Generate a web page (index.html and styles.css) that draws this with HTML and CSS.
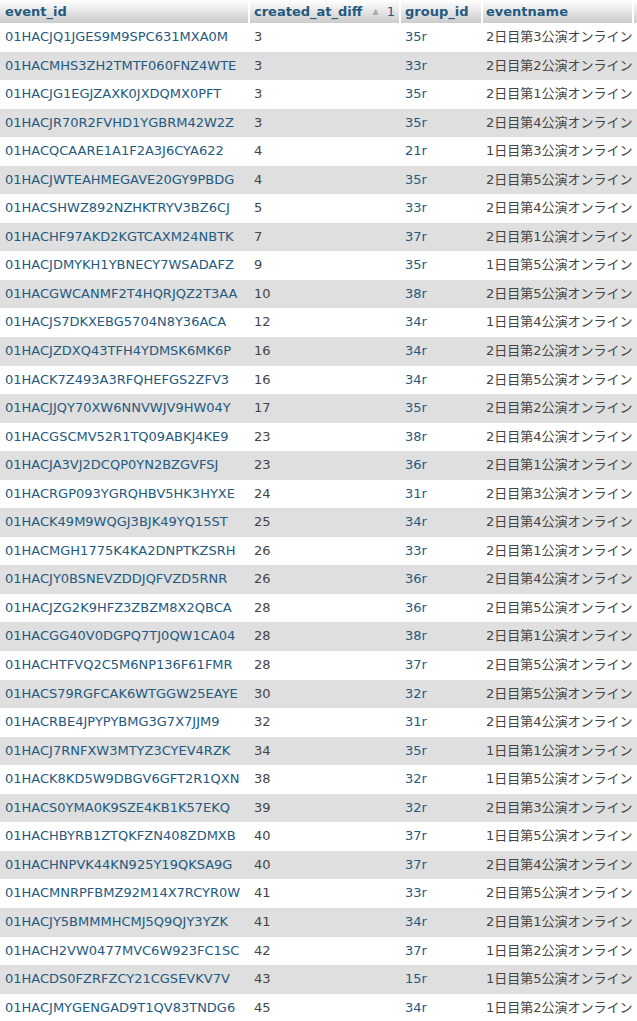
FILE: index.html
```html
<!DOCTYPE html>
<html lang="ja">
<head>
    <meta charset="UTF-8">
    <meta name="viewport" content="width=device-width, initial-scale=1.0">
    <title>event results</title>
    <link rel="stylesheet" href="styles.css">
</head>
<body>

    <!-- Result table (wider than the window, last column is cut off) -->
    <table class="data">
        <colgroup>
            <col class="c-id">
            <col class="c-diff">
            <col class="c-group">
            <col class="c-name">
            <col class="c-more">
        </colgroup>
        <thead>
            <tr>
                <th class="first">event_id</th>
                <th>created_at_diff <span class="sort"><span class="arrow">&#9650;</span> 1</span></th>
                <th>group_id</th>
                <th class="name">eventname</th>
                <th></th>
            </tr>
        </thead>
        <tbody>
            <tr><td class="first link">01HACJQ1JGES9M9SPC631MXA0M</td><td>3</td><td class="link">35r</td><td class="name">2日目第3公演オンライン</td><td></td></tr>
            <tr><td class="first link">01HACMHS3ZH2TMTF060FNZ4WTE</td><td>3</td><td class="link">33r</td><td class="name">2日目第2公演オンライン</td><td></td></tr>
            <tr><td class="first link">01HACJG1EGJZAXK0JXDQMX0PFT</td><td>3</td><td class="link">35r</td><td class="name">2日目第1公演オンライン</td><td></td></tr>
            <tr><td class="first link">01HACJR70R2FVHD1YGBRM42W2Z</td><td>3</td><td class="link">35r</td><td class="name">2日目第4公演オンライン</td><td></td></tr>
            <tr><td class="first link">01HACQCAARE1A1F2A3J6CYA622</td><td>4</td><td class="link">21r</td><td class="name">1日目第3公演オンライン</td><td></td></tr>
            <tr><td class="first link">01HACJWTEAHMEGAVE20GY9PBDG</td><td>4</td><td class="link">35r</td><td class="name">2日目第5公演オンライン</td><td></td></tr>
            <tr><td class="first link">01HACSHWZ892NZHKTRYV3BZ6CJ</td><td>5</td><td class="link">33r</td><td class="name">2日目第4公演オンライン</td><td></td></tr>
            <tr><td class="first link">01HACHF97AKD2KGTCAXM24NBTK</td><td>7</td><td class="link">37r</td><td class="name">2日目第1公演オンライン</td><td></td></tr>
            <tr><td class="first link">01HACJDMYKH1YBNECY7WSADAFZ</td><td>9</td><td class="link">35r</td><td class="name">1日目第5公演オンライン</td><td></td></tr>
            <tr><td class="first link">01HACGWCANMF2T4HQRJQZ2T3AA</td><td>10</td><td class="link">38r</td><td class="name">2日目第5公演オンライン</td><td></td></tr>
            <tr><td class="first link">01HACJS7DKXEBG5704N8Y36ACA</td><td>12</td><td class="link">34r</td><td class="name">1日目第4公演オンライン</td><td></td></tr>
            <tr><td class="first link">01HACJZDXQ43TFH4YDMSK6MK6P</td><td>16</td><td class="link">34r</td><td class="name">2日目第2公演オンライン</td><td></td></tr>
            <tr><td class="first link">01HACK7Z493A3RFQHEFGS2ZFV3</td><td>16</td><td class="link">34r</td><td class="name">2日目第5公演オンライン</td><td></td></tr>
            <tr><td class="first link">01HACJJQY70XW6NNVWJV9HW04Y</td><td>17</td><td class="link">35r</td><td class="name">2日目第2公演オンライン</td><td></td></tr>
            <tr><td class="first link">01HACGSCMV52R1TQ09ABKJ4KE9</td><td>23</td><td class="link">38r</td><td class="name">2日目第4公演オンライン</td><td></td></tr>
            <tr><td class="first link">01HACJA3VJ2DCQP0YN2BZGVFSJ</td><td>23</td><td class="link">36r</td><td class="name">2日目第1公演オンライン</td><td></td></tr>
            <tr><td class="first link">01HACRGP093YGRQHBV5HK3HYXE</td><td>24</td><td class="link">31r</td><td class="name">2日目第3公演オンライン</td><td></td></tr>
            <tr><td class="first link">01HACK49M9WQGJ3BJK49YQ15ST</td><td>25</td><td class="link">34r</td><td class="name">2日目第4公演オンライン</td><td></td></tr>
            <tr><td class="first link">01HACMGH1775K4KA2DNPTKZSRH</td><td>26</td><td class="link">33r</td><td class="name">2日目第1公演オンライン</td><td></td></tr>
            <tr><td class="first link">01HACJY0BSNEVZDDJQFVZD5RNR</td><td>26</td><td class="link">36r</td><td class="name">2日目第4公演オンライン</td><td></td></tr>
            <tr><td class="first link">01HACJZG2K9HFZ3ZBZM8X2QBCA</td><td>28</td><td class="link">36r</td><td class="name">2日目第5公演オンライン</td><td></td></tr>
            <tr><td class="first link">01HACGG40V0DGPQ7TJ0QW1CA04</td><td>28</td><td class="link">38r</td><td class="name">2日目第1公演オンライン</td><td></td></tr>
            <tr><td class="first link">01HACHTFVQ2C5M6NP136F61FMR</td><td>28</td><td class="link">37r</td><td class="name">2日目第5公演オンライン</td><td></td></tr>
            <tr><td class="first link">01HACS79RGFCAK6WTGGW25EAYE</td><td>30</td><td class="link">32r</td><td class="name">2日目第5公演オンライン</td><td></td></tr>
            <tr><td class="first link">01HACRBE4JPYPYBMG3G7X7JJM9</td><td>32</td><td class="link">31r</td><td class="name">2日目第4公演オンライン</td><td></td></tr>
            <tr><td class="first link">01HACJ7RNFXW3MTYZ3CYEV4RZK</td><td>34</td><td class="link">35r</td><td class="name">1日目第1公演オンライン</td><td></td></tr>
            <tr><td class="first link">01HACK8KD5W9DBGV6GFT2R1QXN</td><td>38</td><td class="link">32r</td><td class="name">1日目第5公演オンライン</td><td></td></tr>
            <tr><td class="first link">01HACS0YMA0K9SZE4KB1K57EKQ</td><td>39</td><td class="link">32r</td><td class="name">2日目第3公演オンライン</td><td></td></tr>
            <tr><td class="first link">01HACHBYRB1ZTQKFZN408ZDMXB</td><td>40</td><td class="link">37r</td><td class="name">1日目第5公演オンライン</td><td></td></tr>
            <tr><td class="first link">01HACHNPVK44KN925Y19QKSA9G</td><td>40</td><td class="link">37r</td><td class="name">2日目第4公演オンライン</td><td></td></tr>
            <tr><td class="first link">01HACMNRPFBMZ92M14X7RCYR0W</td><td>41</td><td class="link">33r</td><td class="name">2日目第5公演オンライン</td><td></td></tr>
            <tr><td class="first link">01HACJY5BMMMHCMJ5Q9QJY3YZK</td><td>41</td><td class="link">34r</td><td class="name">2日目第1公演オンライン</td><td></td></tr>
            <tr><td class="first link">01HACH2VW0477MVC6W923FC1SC</td><td>42</td><td class="link">37r</td><td class="name">1日目第2公演オンライン</td><td></td></tr>
            <tr><td class="first link">01HACDS0FZRFZCY21CGSEVKV7V</td><td>43</td><td class="link">15r</td><td class="name">1日目第5公演オンライン</td><td></td></tr>
            <tr><td class="first link">01HACJMYGENGAD9T1QV83TNDG6</td><td>45</td><td class="link">34r</td><td class="name">1日目第2公演オンライン</td><td></td></tr>
        </tbody>
    </table>

</body>
</html>
```

FILE: styles.css
```css
html, body {
    margin: 0;
    padding: 0;
    overflow: hidden;
    background-color: #fff;
}

body {
    font-family: "DejaVu Sans", Verdana, "Noto Sans CJK JP", sans-serif;
    font-size: 13px;
    color: #444;
}

.data {
    table-layout: fixed;
    border-collapse: separate;
    border-spacing: 0;
    width: 760px;
}

.c-id { width: 248px; }
.c-diff { width: 151px; }
.c-group { width: 82px; }
.c-name { width: 151px; }
.c-more { width: 128px; }

.data th,
.data td {
    padding: 0 4px;
    border-left: 2px solid transparent;
    white-space: nowrap;
    overflow: hidden;
    text-align: left;
}

.data th.first,
.data td.first {
    border-left: 0;
    padding-left: 5px;
}

.data th.name,
.data td.name {
    padding-left: 3px;
    padding-right: 0;
}

/* header row */
.data th {
    height: 23px;
    line-height: 23px;
    font-weight: bold;
    color: #235a81;
    background: linear-gradient(#fff, #ccc);
    border-left-color: #fff;
}

.data th .sort {
    float: right;
    font-weight: normal;
    color: #235a81;
}

.data th .arrow {
    font-size: 8px;
    color: #aaa;
    vertical-align: 2px;
    margin-right: 4px;
}

/* body rows */
.data td {
    height: 28.55px;
    line-height: 28.55px;
    background-color: #fff;
}

.data tbody tr:nth-child(even) td {
    background-color: #dfdfdf;
}

.data td.link {
    color: #235a81;
}
```
